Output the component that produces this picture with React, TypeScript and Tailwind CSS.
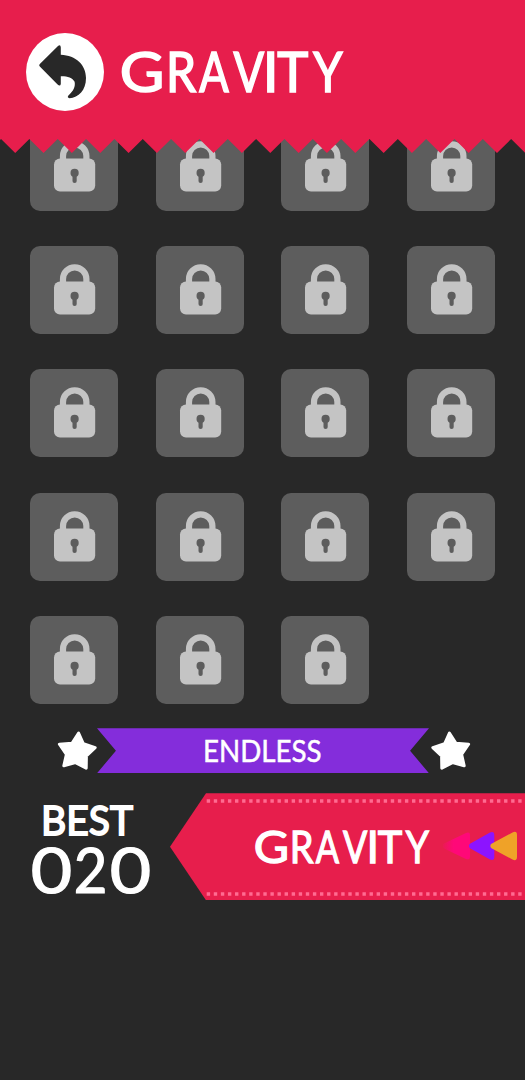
import React from 'react';

const LOCKED_LEVELS = 19;
const TEETH = 20;
const TOOTH_WIDTH = 28.34;

const GRAVITY = [
  { char: 'G', style: 'w-[0.82em] scale-x-[1.08]' },
  { char: 'R', style: 'w-[0.566em] scale-x-[0.85]' },
  { char: 'A', style: 'w-[0.6em] scale-x-[0.77]' },
  { char: 'V', style: 'w-[0.627em] scale-x-[0.8]' },
  { char: 'I', style: 'w-[0.16em]' },
  { char: 'T', style: 'w-[0.627em] scale-x-[0.93]' },
  { char: 'Y', style: 'w-[0.6em] scale-x-[0.83]' },
];

const SCORE = [
  { char: '0', style: 'w-[43px] scale-x-[1.17]' },
  { char: '2', style: 'w-[35px] scale-x-[0.95]' },
  { char: '0', style: 'w-[45px] scale-x-[1.17]' },
];

const zigzagPath = () => {
  let d = 'M-27.3 0';
  for (let i = 0; i < TEETH; i++) {
    const x = -27.3 + i * TOOTH_WIDTH;
    d += ` L${x} 1 L${x + TOOTH_WIDTH / 2} 15 L${x + TOOTH_WIDTH} 1`;
  }
  return `${d} V0 Z`;
};

const Letters: React.FC<{ letters: { char: string; style: string }[] }> = ({ letters }) => (
  <>
    {letters.map(({ char, style }, i) => (
      <span key={i} className={`inline-flex shrink-0 justify-center ${style}`}>{char}</span>
    ))}
  </>
);

const BackButton: React.FC = () => (
  <button aria-label="Back" className="w-[78px] h-[78px] shrink-0 rounded-full bg-white">
    <svg viewBox="0 0 78 78" className="w-full h-full">
      <path
        d="M13.8 31 L32 12.9 Q34.6 11.2 34.8 14.4 V21.8 C50 22.5 60 32 60 45 C60 57.5 52.5 64.5 43.5 65.2 Q40.8 64.7 42.4 62.6 C47.5 58 49.6 53.5 48.6 48.8 C46.5 44.5 41 43 34.8 43.2 V51 Q34.2 53.8 31.6 51.6 L13.8 33.5 Q12.5 32.3 13.8 31 Z"
        fill="#282828"
      />
    </svg>
  </button>
);

const LockedTile: React.FC = () => (
  <div className="w-[88px] h-[88px] rounded-[10px] bg-[#5d5d5d]">
    <svg viewBox="0 0 88 88" className="w-full h-full">
      <path d="M33 40 V33 A11.7 11.7 0 0 1 56.4 33 V40" fill="none" stroke="#c4c4c4" strokeWidth="6.2" />
      <rect x="24" y="35.4" width="41.2" height="33" rx="6" fill="#c4c4c4" />
      <circle cx="44.6" cy="49.9" r="4.1" fill="#5d5d5d" />
      <path d="M44.6 50 V58" stroke="#5d5d5d" strokeWidth="4.2" strokeLinecap="round" />
    </svg>
  </div>
);

const Star: React.FC<{ flipped?: boolean }> = ({ flipped }) => (
  <svg viewBox="0 0 42 42" className={`w-[42px] h-[42px] shrink-0 ${flipped ? '-scale-x-100' : ''}`}>
    <path
      d="M22.6 3 L27.4 13.8 L39.2 17.6 L30.4 26 L30.2 38.2 L19.5 32.6 L7.8 35.8 L10.4 24.4 L3.4 14.2 L16 13.2 Z"
      fill="#fff"
      stroke="#fff"
      strokeWidth="3"
      strokeLinejoin="round"
    />
  </svg>
);

const Stitches: React.FC = () => (
  <svg viewBox="0 0 319 4" className="w-[319px] h-1 block">
    <path d="M0.7 2 H319" stroke="#ff6b91" strokeWidth="3.4" strokeDasharray="3.4 3.68" />
  </svg>
);

const ModeArrows: React.FC = () => (
  <svg viewBox="0 0 76 32" className="w-[76px] h-8 shrink-0 mb-[3px]">
    <defs>
      <linearGradient id="arrowFade" x1="0" x2="1">
        <stop offset="0" stopColor="#ff0878" stopOpacity="0.15" />
        <stop offset="0.4" stopColor="#ff0878" />
      </linearGradient>
    </defs>
    <path d="M0 16 Q-1 15 1 13.5 L23 3 Q27 1.5 27 5 V27 Q27 30.5 23 29 L1 18.5 Q-1 17 0 16 Z" fill="url(#arrowFade)" />
    <path d="M26 16 Q25.5 15 27 13.8 L47 2.5 Q51.3 1 51.3 5 V27 Q51.3 31 47 29.5 L27 18.2 Q25.5 17 26 16 Z" fill="#8c14ff" />
    <path d="M47.5 16 Q47 15 48.5 13.8 L70 2.2 Q74 .8 74 5 V27 Q74 31.2 70 29.8 L48.5 18.2 Q47 17 47.5 16 Z" fill="#efa228" />
  </svg>
);

export default function App() {
  return (
    <div className="w-[525px] h-[1080px] overflow-hidden bg-[#282828] text-white font-['Lato',sans-serif] flex flex-col">
      <header className="relative z-10 h-[139px] shrink-0 bg-[#e71e4c]">
        <div className="flex items-center pt-[33px] pl-[26px]">
          <BackButton />
          <h1 className="ml-[14.5px] mb-[3px] flex text-[56.5px] leading-[75px] [-webkit-text-stroke:1.7px_white]">
            <Letters letters={GRAVITY} />
          </h1>
        </div>
        <svg viewBox="0 0 525 15" className="absolute left-0 top-[138px] w-[525px] h-[15px]">
          <path d={zigzagPath()} fill="#e71e4c" />
        </svg>
      </header>

      <main className="-mt-4 pl-[30px] grid grid-cols-[repeat(4,88px)] gap-x-[37.6px] gap-y-[35.2px] shrink-0">
        {Array.from({ length: LOCKED_LEVELS }, (_, i) => (
          <LockedTile key={i} />
        ))}
      </main>

      <section className="mt-[24.5px] h-[45px] shrink-0 flex items-center pl-[56px]">
        <Star />
        <div className="-ml-px w-[332px] h-[45px] bg-[#842ddb] flex items-center justify-center [clip-path:polygon(0_0,100%_0,94.3%_50%,100%_100%,0_100%,5.7%_50%)]">
          <span className="text-[31px] leading-[45px] -translate-x-[1px] scale-x-[0.895] [-webkit-text-stroke:0.5px_white]">ENDLESS</span>
        </div>
        <div className="ml-px">
          <Star flipped />
        </div>
      </section>

      <section className="mt-5 h-[107px] shrink-0 flex">
        <div className="w-[170px] flex flex-col">
          <div className="mt-[5px] ml-[41px] w-fit text-[41.5px] leading-[42px] origin-left scale-x-[0.94] [-webkit-text-stroke:1.8px_white]">BEST</div>
          <div className="mt-[7px] ml-[29.5px] flex text-[61px] leading-[46px] [-webkit-text-stroke:1.2px_white]">
            <Letters letters={SCORE} />
          </div>
        </div>
        <div className="w-[355px] h-[107px] bg-[#e71e4c] flex flex-col justify-between pt-[6px] pb-[4px] pl-[36px] [clip-path:polygon(0_50%,36px_0,100%_0,100%_100%,36px_100%)]">
          <Stitches />
          <div className="flex items-center pl-[46.5px]">
            <div className="w-[190px] mb-[3px] flex text-[44.7px] leading-[48px] [-webkit-text-stroke:1.3px_white]">
              <Letters letters={GRAVITY} />
            </div>
            <ModeArrows />
          </div>
          <Stitches />
        </div>
      </section>
    </div>
  );
}
